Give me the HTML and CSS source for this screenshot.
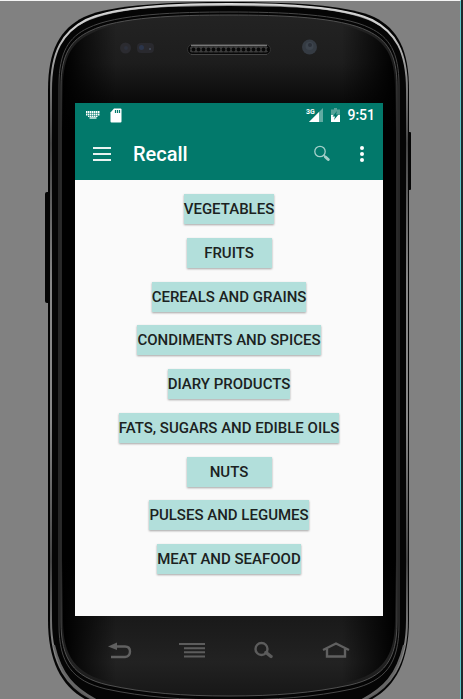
FILE: index.html
```html
<!DOCTYPE html>
<html lang="en">
<head>
<meta charset="utf-8">
<title>Recall</title>
<link rel="stylesheet" href="styles.css">
</head>
<body>
<div class="desktop">
  <div class="phone">
    <svg class="shell" viewBox="44 0 370 699" preserveAspectRatio="xMidYMin slice" aria-hidden="true">
      <defs>
        <linearGradient id="face" x1="0" y1="0" x2="0" y2="1">
          <stop offset="0" stop-color="#232323"/>
          <stop offset=".07" stop-color="#1d1d1d"/>
          <stop offset=".13" stop-color="#090909"/>
          <stop offset=".17" stop-color="#000"/>
          <stop offset=".8" stop-color="#000"/>
          <stop offset=".88" stop-color="#191919"/>
          <stop offset=".95" stop-color="#222"/>
          <stop offset="1" stop-color="#171717"/>
        </linearGradient>
        <linearGradient id="side" x1="0" y1="0" x2="1" y2="0">
          <stop offset="0" stop-color="#000"/>
          <stop offset=".16" stop-color="#000" stop-opacity="0"/>
          <stop offset=".84" stop-color="#000" stop-opacity="0"/>
          <stop offset="1" stop-color="#000"/>
        </linearGradient>
        <linearGradient id="rim" x1="0" y1="0" x2="0" y2="1">
          <stop offset="0" stop-color="#ddd"/>
          <stop offset=".04" stop-color="#ccc"/>
          <stop offset=".12" stop-color="#777"/>
          <stop offset=".2" stop-color="#444"/>
          <stop offset=".4" stop-color="#888"/>
          <stop offset=".6" stop-color="#888"/>
          <stop offset=".8" stop-color="#444"/>
          <stop offset=".93" stop-color="#888"/>
          <stop offset="1" stop-color="#555"/>
        </linearGradient>
        <pattern id="mesh" width="5" height="5" patternUnits="userSpaceOnUse" x="191" y="47">
          <rect width="5" height="5" fill="#3c3c3c"/>
          <circle cx="2.500" cy="2.500" r="1.900" fill="#080808"/>
        </pattern>
      </defs>
      <rect x="45" y="192" width="7" height="111" rx="2" fill="#050505"/>
      <rect x="406" y="132" width="5" height="58" rx="1" fill="#050505"/>
      <path d="M48 90C48 50 60 29 84 17C112 4 175 2 229 2S346 4 374 17C398 29 409 50 409 90V620C409 665 393 691 364 703H93C64 691 48 665 48 620Z" fill="#050505"/>
      <path d="M51 90C51 51 63 32 86 20C113 7 175 4 229 4S345 7 372 20C395 32 407 51 407 90V620C407 664 391 688 362 701M51 90V620C51 664 67 688 96 701" fill="none" stroke="url(#rim)" stroke-width="2"/>
      <path d="M78 25C108 6 170 5 229 5S350 6 380 25" fill="none" stroke="#ccc" stroke-width="2" opacity=".7"/>
      <path d="M54 645C61 675 74 689 98 701M404 645C397 675 384 689 360 701" fill="none" stroke="#666" stroke-width="2"/>
      <path d="M59 85C59 52 69 37 88 28C116 14 178 12 229 12S342 14 370 28C389 37 399 52 399 85V625C399 663 386 681 352 689C315 697 275 700 229 700S143 697 106 689C72 681 59 663 59 625Z" fill="#050505" stroke="#484848"/>
      <path d="M61 86C61 54 71 40 90 31C118 17 178 15 229 15S340 17 368 31C387 40 397 54 397 86V622C397 659 385 677 350 685C313 693 275 696 229 696S145 693 108 685C73 677 61 659 61 622Z" fill="url(#face)" stroke="#505050"/>
      <path d="M63 88C63 55 73 42 92 33C120 19 178 17 229 17S338 19 366 33C385 42 395 55 395 88V620C395 656 383 674 348 682C311 690 275 693 229 693S147 690 110 682C75 674 63 656 63 620Z" fill="url(#side)"/>
      <circle cx="125.500" cy="48" r="5.500" fill="#2b2b30"/>
      <circle cx="126" cy="48" r="2" fill="#2d313c"/>
      <rect x="137" y="43" width="17" height="10" rx="4" fill="#29292e"/>
      <circle cx="141.500" cy="47.500" r="2.500" fill="#2b354b"/>
      <circle cx="150" cy="49" r="1" fill="#444c5c"/>
      <rect x="187.500" y="44.500" width="83" height="10" rx="5" fill="#080808" stroke="#333"/>
      <rect x="189.500" y="46.500" width="79" height="6" rx="3" fill="url(#mesh)"/>
      <path d="M191 45.500H267" stroke="#777" stroke-width="1.500"/>
      <path d="M191 54.500H267" stroke="#444"/>
      <circle cx="309.500" cy="47" r="7.500" fill="#353b43"/>
      <circle cx="309.500" cy="46" r="4" fill="#3d444d"/>
      <circle cx="310" cy="45" r="2" fill="#2b3038"/>
    </svg>
    <main class="screen">
      <div class="status">
        <svg width="14" height="8" viewBox="0 0 14 8" aria-hidden="true"><path d="M0 1H14M0 3.500H14" stroke="#fff" stroke-width="1.800" stroke-dasharray="1.500 .5"/><path d="M2 5.500H12" stroke="#fff" stroke-dasharray="1.500 .5"/><path d="M3.500 7H10.500" stroke="#fff" stroke-width="1.300"/></svg>
        <svg class="card" width="12" height="15" viewBox="0 0 12 15" aria-hidden="true"><path d="M4 .5H10.500Q11.500 .5 11.500 1.500V13.500Q11.500 14.500 10.500 14.500H1.500Q.5 14.500 .5 13.500V4.500Z" fill="#fff"/><path d="M5.500 2V5M7.500 2V5M9.500 2V5" stroke="#02796b" stroke-width="1.200"/></svg>
        <span class="spacer"></span>
        <svg class="signal" width="17" height="14" viewBox="0 0 17 14" aria-hidden="true"><path d="M17 0V14H3Z" fill="#62aba2"/><path d="M13 4V14H3Z" fill="#fff"/><text class="network" x="0" y="6">3G</text></svg>
        <svg class="battery" width="9" height="14" viewBox="0 0 9 14" aria-hidden="true"><path d="M0 1.500H3V0H6V1.500H9V14H0Z" fill="#56a399"/><path d="M0 7H9V14H0Z" fill="#fff"/><path d="M6 3L1.500 8.500H4L3 12L7.500 6.500H5Z" fill="#02796b"/></svg>
        <time class="clock">9:51</time>
      </div>
      <header class="toolbar">
        <button class="tool" aria-label="Open menu"><svg width="18" height="14" viewBox="0 0 18 14"><path d="M0 1H18M0 7H18M0 13H18" stroke="#e8f3f1" stroke-width="2"/></svg></button>
        <h1 class="title">Recall</h1>
        <button class="tool" aria-label="Search"><svg width="16" height="17" viewBox="0 0 16 17"><circle cx="6" cy="6.500" r="5.200" fill="none" stroke="#a5d0ca" stroke-width="1.300"/><path d="M9.500 10L11 11.500" stroke="#a5d0ca" stroke-width="1.500"/><path d="M11.500 12L14.200 14.500" stroke="#a5d0ca" stroke-width="3" stroke-linecap="round"/></svg></button>
        <button class="tool more" aria-label="More options"><svg width="4" height="16" viewBox="0 0 4 16"><g fill="#fff"><circle cx="2" cy="2" r="2"/><circle cx="2" cy="8" r="2"/><circle cx="2" cy="14" r="2"/></g></svg></button>
      </header>
      <div class="categories">
        <button class="category">Vegetables</button>
        <button class="category">Fruits</button>
        <button class="category">Cereals and grains</button>
        <button class="category">Condiments and spices</button>
        <button class="category">Diary products</button>
        <button class="category">Fats, sugars and edible oils</button>
        <button class="category">Nuts</button>
        <button class="category">Pulses and legumes</button>
        <button class="category">Meat and seafood</button>
      </div>
    </main>
    <nav class="keys">
      <button class="key" aria-label="Back"><svg width="24" height="17" viewBox="0 0 24 17"><path d="M8 4.500H17Q22 4.500 22 9.500T17 15H3" fill="none" stroke="#606060" stroke-width="2.400"/><path d="M0 4.500L9 .5V8Z" fill="#606060"/></svg></button>
      <button class="key" aria-label="Menu"><svg width="26" height="15" viewBox="0 0 26 15"><path d="M0 1H26M5 5.300H26M5 9.300H26M5 13.500H26" stroke="#5c5c5c" stroke-width="2"/></svg></button>
      <button class="key" aria-label="Search"><svg width="20" height="18" viewBox="0 0 20 18"><circle cx="7.500" cy="8" r="6" fill="none" stroke="#5c5c5c" stroke-width="2.400"/><path d="M12 11.500L17 15.500" stroke="#5c5c5c" stroke-width="3.500" stroke-linecap="round"/></svg></button>
      <button class="key" aria-label="Home"><svg width="28" height="16" viewBox="0 0 28 16"><path d="M1 8L14 1.500L27 8M5 7V14.500H23V7" fill="none" stroke="#606060" stroke-width="2.400"/></svg></button>
    </nav>
  </div>
</div>
</body>
</html>
```
FILE: styles.css
```css
* {
  box-sizing: border-box;
}

body {
  margin: 0;
  background: #20282b;
  font-family: Roboto, "Liberation Sans", sans-serif;
}

button {
  margin: 0;
  padding: 0;
  border: 0;
  background: none;
  font: inherit;
  color: inherit;
}

svg {
  display: block;
}

.desktop {
  display: flex;
  justify-content: center;
  min-height: 100vh;
  margin-right: 2px;
  padding-right: 2px;
  border-top: 1px solid #f4f4f4;
  border-right: 1px solid #5cc4c8;
  background: #818181;
}

.phone {
  position: relative;
  display: flex;
  flex-direction: column;
  width: 370px;
  padding: 102px 31px 0;
}

.shell {
  position: absolute;
  inset: -1px 0 0;
  width: 100%;
  height: calc(100% + 1px);
}

.screen {
  position: relative;
  flex: 1;
  display: flex;
  flex-direction: column;
  background: #fafafa;
}

.status {
  display: flex;
  align-items: center;
  height: 24px;
  padding: 0 8px 0 11px;
  background: #02796b;
  color: #fff;
}

.card {
  margin-left: 10px;
}

.spacer {
  flex: 1;
}

.signal {
  overflow: visible;
}

.network {
  fill: #fff;
  font-size: 7px;
  font-weight: 700;
}

.battery {
  margin: 0 7px 0 8px;
}

.clock {
  font-size: 14px;
  font-weight: 500;
}

.toolbar {
  display: flex;
  align-items: center;
  height: 53px;
  padding: 0 14px 0 12px;
  background: #02796b;
  color: #fff;
}

.tool {
  display: grid;
  place-items: center;
  width: 30px;
  height: 40px;
}

.more {
  width: 14px;
  margin-left: 18px;
}

.title {
  flex: 1;
  margin: 0;
  padding-left: 16px;
  font-size: 20px;
  font-weight: 500;
}

.categories {
  flex: 1;
  display: flex;
  flex-direction: column;
  align-items: center;
  justify-content: space-between;
  padding: 14px 0 42px;
}

.category {
  min-width: 85px;
  height: 30px;
  background: #b2dfdb;
  box-shadow: 0 1px 2px rgba(0, 0, 0, 0.35);
  color: #1b2221;
  font-size: 15px;
  font-weight: 500;
  text-transform: uppercase;
  white-space: nowrap;
}

.keys {
  position: relative;
  display: flex;
  justify-content: space-between;
  height: 83px;
  padding: 19px 32px 34px 30px;
}

.key {
  display: grid;
  place-items: center;
  width: 30px;
  height: 30px;
}
```
